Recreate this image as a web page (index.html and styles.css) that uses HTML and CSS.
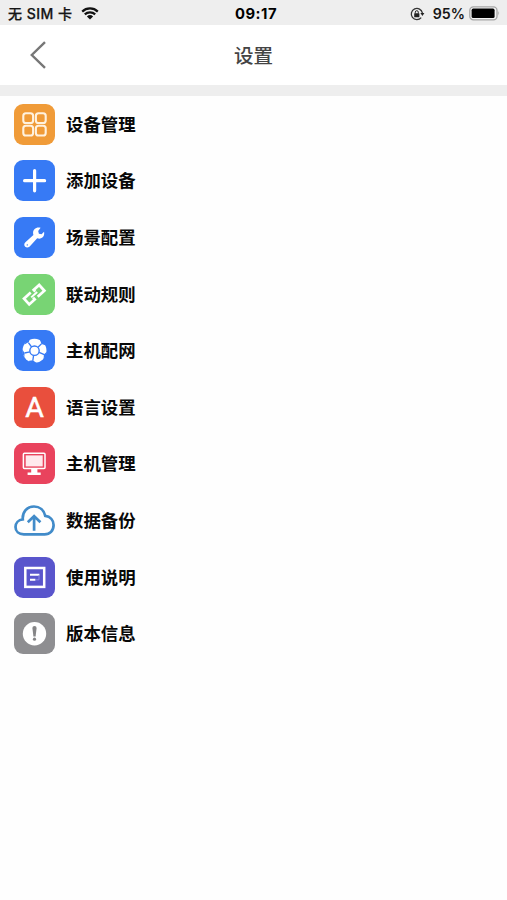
FILE: index.html
```html
<!DOCTYPE html>
<html lang="zh-CN">
<head>
<meta charset="utf-8">
<title>设置</title>
<link rel="stylesheet" href="styles.css">
</head>
<body>
<div class="status">
  <div class="status-left">
    <span class="carrier">无 SIM 卡</span>
    <svg class="wifi" width="18" height="13" viewBox="0 0 18 13"><path d="M1.2 4.6a11.2 11.2 0 0 1 15.6 0M3.8 7.4a7.5 7.5 0 0 1 10.4 0" fill="none" stroke="#111" stroke-width="2.2"/><path d="M5.9 9.5a4.5 4.5 0 0 1 6.2 0L9 12.6z" fill="#111"/></svg>
  </div>
  <span class="time">09:17</span>
  <div class="status-right">
    <svg width="15" height="14" viewBox="0 0 15 14"><path d="M11.2 10.6A5.6 5.6 0 1 1 12.4 6" fill="none" stroke="#333" stroke-width="1.3"/><path d="M10.4 5.9h4L12.4 9z" fill="#222"/><rect x="4.2" y="6.2" width="5.2" height="4" rx=".5" fill="#222"/><path d="M5.3 6.5V5.2a1.5 1.5 0 0 1 3 0v1.3" fill="none" stroke="#222"/></svg>
    <span class="percent">95%</span>
    <svg class="battery" width="32" height="15" viewBox="0 0 32 15"><rect x=".8" y=".8" width="27.2" height="13" rx="3.6" fill="#f5f5f5" stroke="#a5a5a5" stroke-width="1.3"/><rect x="2.6" y="2.6" width="23" height="9.4" rx="1.6" fill="#000"/><path d="M29.4 5q1.7 2.3 0 4.6z" fill="#a0a0a0"/></svg>
  </div>
</div>
<header class="nav">
  <svg class="back" width="18" height="30" viewBox="0 0 18 30"><path d="M16 2.2 2.8 15 16 27.8" fill="none" stroke="#777" stroke-width="2.4"/></svg>
  <h1>设置</h1>
</header>
<ul class="menu">
  <li><span class="tile orange"><svg viewBox="0 0 41 41"><g fill="none" stroke="#fff2df" stroke-width="2.1"><rect x="9.3" y="9.2" width="9.8" height="9.8" rx="2.6"/><rect x="21.9" y="9.2" width="9.8" height="9.8" rx="2.6"/><rect x="9.3" y="21.7" width="9.8" height="9.8" rx="2.6"/><rect x="21.9" y="21.7" width="9.8" height="9.8" rx="2.6"/></g></svg></span><span class="label">设备管理</span></li>
  <li><span class="tile blue"><svg viewBox="0 0 41 41"><path d="M20.6 10.6v20.2M10.6 20.7h20" stroke="#fff" stroke-width="3.2" stroke-linecap="round"/></svg></span><span class="label">添加设备</span></li>
  <li><span class="tile blue"><svg viewBox="0 0 41 41"><path d="M26.6 10.8 24.2 14l.7 2.7 2.6.6 2.6-2.6c.4 2.8-.2 4.7-1.7 5.9-1.5 1.3-3.4 1.3-5.2.7l-7.5 8.1c-1.5 1.4-3.2 1.5-4.5.4-1.3-1.2-1.2-3.4.2-4.6l8-7.3c-.6-2.1-.5-4.2 1-5.7 1.7-1.6 3.9-2.1 6.2-1.4z" fill="#fff"/><circle cx="13.3" cy="27.9" r=".7" fill="#377af5"/></svg></span><span class="label">场景配置</span></li>
  <li><span class="tile green"><svg viewBox="0 0 41 41"><g transform="rotate(-42 20.2 20.7)" fill="none" stroke="#fff" stroke-width="2.7"><path d="M19 16.8H10v7.8h7.4v-2.4M21.4 24.6h9v-7.8H23v2.4"/><path d="M16.2 20.7h8" stroke-width="2"/></g></svg></span><span class="label">联动规则</span></li>
  <li><span class="tile blue"><svg viewBox="0 0 41 41"><circle cx="20.5" cy="20.7" r="12" fill="#fff"/><circle cx="20.5" cy="20.7" r="4.7" fill="none" stroke="#377af5" stroke-width="1.4"/><path d="m17.6 17-3.2-4.4M24 17.3l3.6-3.7M25.1 22.3l5.2 2.3M19.6 25.4l-.8 5.2M15.9 21.8l-5.4 1.2" fill="none" stroke="#377af5" stroke-width="1.3"/><path d="m10.5 14.5 4.3-2.4 1.2-3-4 1.6zM25.5 8.8l2 5.2 4.6 1.4-2.2-4.2zM33 21.4l-3.1 3-.3 4.7 2.6-3.4zM23 33.2l-4.2-3-4.8.9 3.7 2.5zM8.2 19.3l2.4 3.8-.3 4.2-2-4.2z" fill="#377af5"/></svg></span><span class="label">主机配网</span></li>
  <li><span class="tile red"><span class="letter">A</span></span><span class="label">语言设置</span></li>
  <li><span class="tile rose"><svg viewBox="0 0 41 41"><rect x="9.4" y="10.2" width="21.6" height="15.4" rx="1" fill="none" stroke="#fff" stroke-width="1.5"/><rect x="11.7" y="12.4" width="17" height="11" fill="#ffe9ed"/><path d="M17.2 26h6.2v3.4h3.3v2.5H13.6v-2.5h3.6z" fill="#fff"/></svg></span><span class="label">主机管理</span></li>
  <li><span class="tile"><svg viewBox="0 0 41 41"><g fill="none" stroke="#418bc9" stroke-width="2.7"><path d="M9.8 34.4C4.8 34.2 1.5 31.3 1.5 27c0-4.1 3-7.2 7.3-7.6C8.2 12 13 6.5 20 6.5c5.6 0 10 3.5 11.2 9.3 5 .6 8.4 4.3 8.4 9.2 0 5.7-3.8 9.4-9 9.4z"/><path d="M20.1 30.8V16.6M13.8 22.3l6.3-6.2 6.3 6.2"/></g></svg></span><span class="label">数据备份</span></li>
  <li><span class="tile violet"><svg viewBox="0 0 41 41"><rect x="11.3" y="11" width="18.9" height="18.9" fill="none" stroke="#fff" stroke-width="2.5"/><path d="M16 17.7h9.4M16 22.7h5.4" stroke="#fff" stroke-width="2"/><path d="M25 18v4.8h-3" fill="none" stroke="#8c89e0" stroke-width="1"/></svg></span><span class="label">使用说明</span></li>
  <li><span class="tile gray"><svg viewBox="0 0 41 41"><circle cx="20.5" cy="20.7" r="11.7" fill="#fff"/><path d="M18.4 15.1a2.1 2.1 0 0 1 4.2 0l-1 8.3h-2.2z" fill="#858587"/><circle cx="20.5" cy="26.2" r="1.6" fill="#858587"/></svg></span><span class="label">版本信息</span></li>
</ul>
</body>
</html>
```
FILE: styles.css
```css
* { box-sizing: border-box; }
body {
  margin: 0;
  min-height: 900px;
  background: #fefefe;
  color: #080808;
  font-family: Inter, "Noto Sans CJK SC", sans-serif;
}
svg { display: block; }
.status {
  height: 25px;
  padding: 2px 6px 0 8px;
  background: #eee;
  display: grid;
  grid-template-columns: 1fr auto 1fr;
  align-items: center;
  font-size: 14px;
  line-height: 20px;
  color: #151515;
}
.status-left, .status-right { display: flex; align-items: center; }
.status-left { gap: 8px; }
.status-right { justify-content: flex-end; }
.carrier {
  font-weight: 500;
  font-size: 14px;
  letter-spacing: .5px;
  white-space: nowrap;
  -webkit-text-stroke: .25px #151515;
}
.time {
  padding-left: 3px;
  font-weight: 700;
  color: #000;
  font-size: 14.8px;
  letter-spacing: .5px;
}
.percent { margin: 0 4px 0 8px; font-weight: 600; font-size: 14.2px; }
.nav {
  height: 60px;
  display: grid;
  grid-template-columns: 1fr auto 1fr;
  align-items: center;
  background: #fff;
}
.back { margin-left: 29px; }
.nav h1 {
  margin: 0;
  padding-top: 1px;
  font-size: 19.5px;
  font-weight: 500;
  line-height: 30px;
  color: #444;
}
.menu {
  margin: 0;
  padding: 0;
  list-style: none;
  border-top: 11px solid #eee;
}
.menu li {
  height: 56.6px;
  padding-left: 14px;
  display: flex;
  align-items: center;
  gap: 11px;
}
.label {
  padding-top: 1px;
  font-size: 17.4px;
  font-weight: 700;
  line-height: 26px;
}
.tile {
  width: 41px;
  height: 41px;
  border-radius: 9px;
  display: flex;
  align-items: center;
  justify-content: center;
}
.tile svg { width: 41px; height: 41px; }
.orange { background: #f09b38; }
.blue { background: #377af5; }
.green { background: #78d474; }
.red { background: #e94f3d; }
.rose { background: #e9435d; }
.violet { background: #5955cc; }
.gray { background: #8e8e91; }
.letter {
  font-family: Roboto, sans-serif;
  font-size: 28.5px;
  font-weight: 400;
  line-height: 41px;
  color: #fff;
  -webkit-text-stroke: .5px #fff;
}
```
